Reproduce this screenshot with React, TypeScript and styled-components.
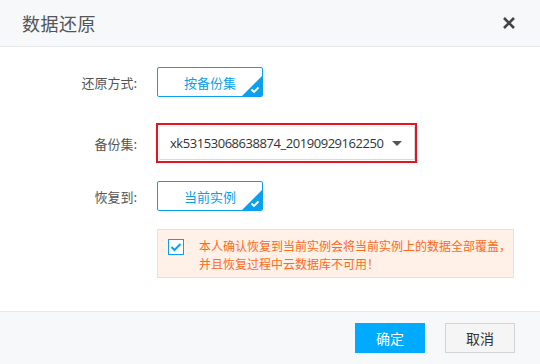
import React from "react";
import styled, { createGlobalStyle } from "styled-components";

const Global = createGlobalStyle`
  html, body { margin: 0; padding: 0; background: #fff; }
  body { font-family: "Noto Sans CJK SC", "Noto Sans", sans-serif; }
  * { box-sizing: border-box; }
`;

const Dialog = styled.div`
  width: 540px;
  height: 364px;
  display: flex;
  flex-direction: column;
  background: #fff;
`;

const Header = styled.div`
  height: 47px;
  flex: none;
  background: #f6f8fa;
  border-bottom: 1px solid #e6e8eb;
  display: flex;
  align-items: center;
  justify-content: space-between;
  padding: 0 24px 0 22px;
`;

const Title = styled.div`
  font-size: 18px;
  color: #555;
  letter-spacing: 0.5px;
`;

const Close = styled.button`
  border: none;
  background: none;
  padding: 0;
  width: 14px;
  height: 14px;
  display: flex;
  cursor: pointer;
`;

const Body = styled.div`
  flex: 1;
  display: flex;
  flex-direction: column;
  padding-top: 20px;
`;

const Row = styled.div<{ $mt?: number }>`
  display: flex;
  align-items: center;
  margin-top: ${(p) => p.$mt ?? 0}px;
`;

const Label = styled.div`
  width: 137px;
  text-align: right;
  font-size: 13px;
  color: #555;
  margin-right: 20px;
`;

const Option = styled.div`
  position: relative;
  width: 106px;
  height: 30px;
  border: 1px solid #0aa0ee;
  border-radius: 2px;
  display: flex;
  align-items: center;
  justify-content: center;
  font-size: 13px;
  color: #0aa0ee;
  overflow: hidden;
  background: #fff;
`;

const Corner = styled.span`
  position: absolute;
  right: 0;
  bottom: 0;
  width: 20px;
  height: 20px;
`;

const SelectOutline = styled.div`
  margin-left: -1px;
  width: 261px;
  height: 40px;
  border: 2px solid #e0161e;
  padding: 1px 0 0 1px;
  display: flex;
`;

const Select = styled.div`
  width: 256px;
  height: 34px;
  border: 1px solid #d9d9d9;
  border-top-color: #f0f0f0;
  border-left-color: #f0f0f0;
  display: flex;
  align-items: center;
  justify-content: space-between;
  padding: 0 12px 0 10px;
  font-family: "Open Sans", "Noto Sans", sans-serif;
  font-size: 13px;
  letter-spacing: -0.45px;
  color: #333;
`;

const Caret = styled.span`
  width: 0;
  height: 0;
  border-left: 5px solid transparent;
  border-right: 5px solid transparent;
  border-top: 5px solid #555;
`;

const Notice = styled.div`
  margin: 18px 0 0 157px;
  width: 357px;
  height: 49px;
  background: #fff0e8;
  border: 1px solid #fcdac6;
  display: flex;
  align-items: flex-start;
  padding: 8px 0 0 10px;
`;

const Check = styled.span`
  flex: none;
  width: 16px;
  height: 16px;
  border: 1px solid #0aa0ee;
  background: #fff;
  display: flex;
  align-items: center;
  justify-content: center;
  margin-top: 1px;
  margin-right: 15px;
`;

const NoticeText = styled.div`
  font-size: 12px;
  line-height: 18px;
  color: #ff6a1a;
  margin-top: -1px;
`;

const Footer = styled.div`
  height: 53px;
  flex: none;
  background: #f6f8fa;
  border-top: 1px solid #e6e8eb;
  display: flex;
  align-items: center;
  justify-content: flex-end;
  gap: 20px;
  padding: 0 25px 0 0;
`;

const Btn = styled.button<{ $primary?: boolean }>`
  width: 70px;
  height: 30px;
  font-family: inherit;
  font-size: 14px;
  border: 1px solid ${(p) => (p.$primary ? "#00aaff" : "#d4d4d4")};
  background: ${(p) => (p.$primary ? "#00aaff" : "#f5f5f5")};
  color: ${(p) => (p.$primary ? "#fff" : "#333")};
  padding: 0;
  cursor: pointer;
`;

const CornerMark = () => (
  <Corner>
    <svg width="20" height="20" viewBox="0 0 20 20">
      <polygon points="20,0 20,20 0,20" fill="#0aa0ee" />
      <path d="M9.5 13.5 L12 16 L16.5 11.5" stroke="#fff" strokeWidth="1.8" fill="none" />
    </svg>
  </Corner>
);

export default function App() {
  return (
    <Dialog>
      <Global />
      <Header>
        <Title>数据还原</Title>
        <Close aria-label="close">
          <svg width="14" height="14" viewBox="0 0 14 14">
            <path d="M2 2 L12 12 M12 2 L2 12" stroke="#444" strokeWidth="2.6" />
          </svg>
        </Close>
      </Header>
      <Body>
        <Row>
          <Label>还原方式:</Label>
          <Option>
            按备份集
            <CornerMark />
          </Option>
        </Row>
        <Row $mt={26}>
          <Label>备份集:</Label>
          <SelectOutline>
            <Select>
              <span>xk53153068638874_20190929162250</span>
              <Caret />
            </Select>
          </SelectOutline>
        </Row>
        <Row $mt={18}>
          <Label>恢复到:</Label>
          <Option>
            当前实例
            <CornerMark />
          </Option>
        </Row>
        <Notice>
          <Check>
            <svg width="12" height="10" viewBox="0 0 12 10">
              <path d="M1.5 5 L4.5 8 L10.5 2" stroke="#0aa0ee" strokeWidth="2" fill="none" />
            </svg>
          </Check>
          <NoticeText>
            本人确认恢复到当前实例会将当前实例上的数据全部覆盖，
            <br />
            并且恢复过程中云数据库不可用！
          </NoticeText>
        </Notice>
      </Body>
      <Footer>
        <Btn $primary>确定</Btn>
        <Btn>取消</Btn>
      </Footer>
    </Dialog>
  );
}
